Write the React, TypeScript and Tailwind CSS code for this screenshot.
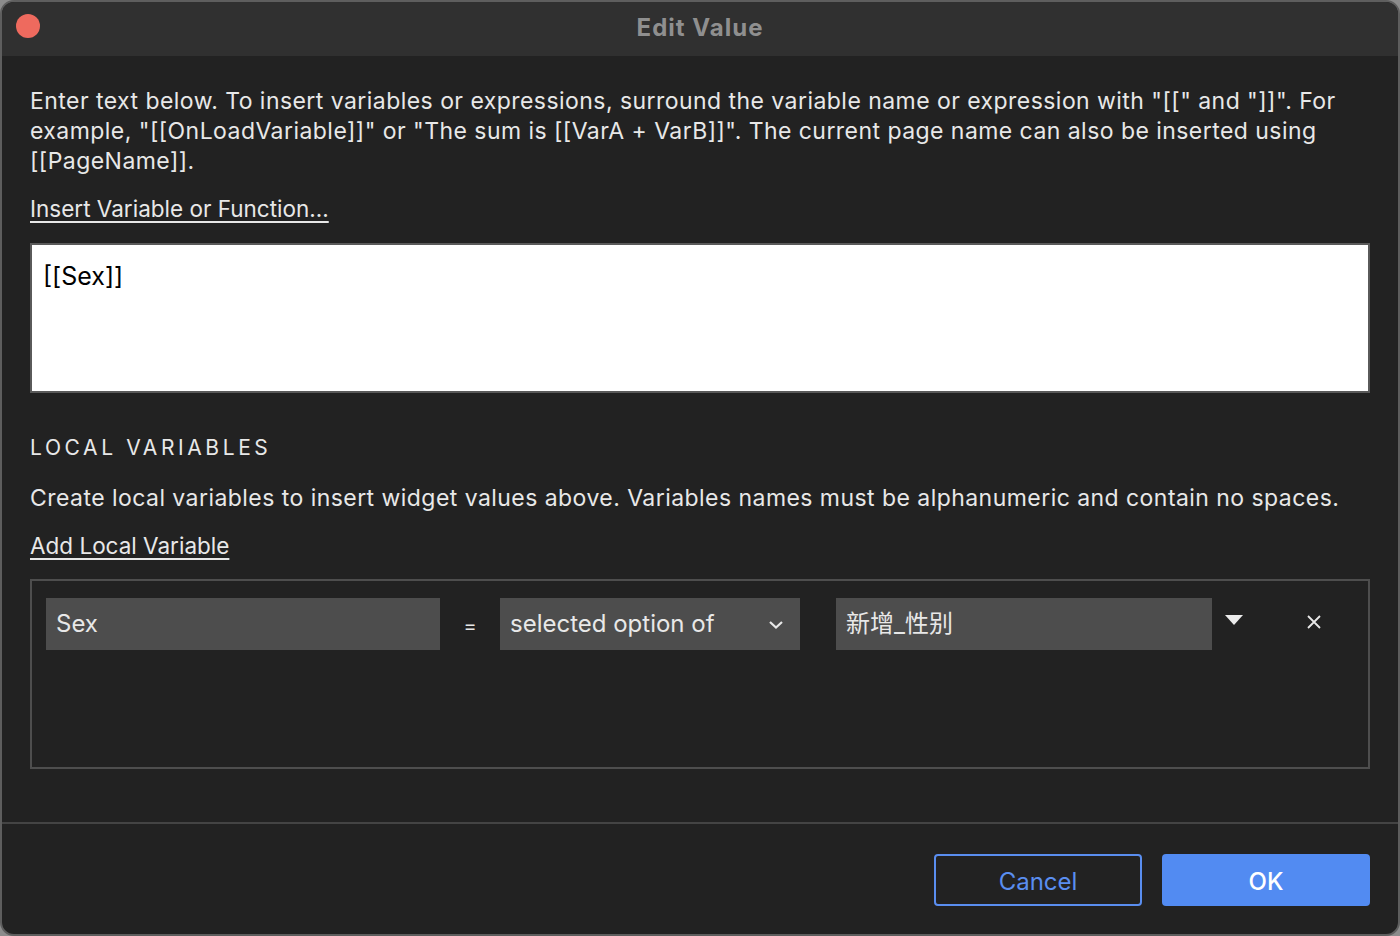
import React from "react";

export default function App() {
  return (
    <div className="w-[1400px] h-[936px] bg-[#8c8c8c] overflow-hidden" style={{ fontFamily: "Inter, 'Noto Sans CJK SC', sans-serif" }}>
      <div className="w-full h-full rounded-[14px] border-2 border-[#5e5e5e] bg-[#222222] overflow-hidden flex flex-col">
        {/* Title bar */}
        <div className="relative h-[54px] bg-[#303030] flex items-center justify-center shrink-0">
          <div className="absolute left-[14px] top-[12px] w-[24px] h-[24px] rounded-full bg-[#ee6a5e]" />
          <div className="text-[24px] font-bold text-[#8f8f8f] tracking-[1px] -mt-[2px]">Edit Value</div>
        </div>
        {/* Body */}
        <div className="flex-1 flex flex-col px-[28px] text-[#e8e8e8] tracking-[0.45px]">
          <p className="mt-[30px] text-[23px] leading-[30px]">
            Enter text below. To insert variables or expressions, surround the variable name or expression with "[[" and "]]". For example, "[[OnLoadVariable]]" or "The sum is [[VarA + VarB]]". The current page name can also be inserted using [[PageName]].
          </p>
          <div className="mt-[18px] text-[22.5px] leading-[30px] tracking-normal underline underline-offset-[4px]">Insert Variable or Function...</div>
          <div className="mt-[19px] h-[150px] bg-white border-2 border-[#5a5a5a] px-[11px] pt-[15px] text-[25px] tracking-normal text-black leading-[32px]">[[Sex]]</div>
          <div className="mt-[40px] text-[21px] leading-[30px] tracking-[3.6px]">LOCAL VARIABLES</div>
          <p className="mt-[20px] text-[23px] leading-[30px]">Create local variables to insert widget values above. Variables names must be alphanumeric and contain no spaces.</p>
          <div className="mt-[18px] text-[22.5px] leading-[30px] tracking-normal underline underline-offset-[4px]">Add Local Variable</div>
          <div className="mt-[18px] h-[190px] border-2 border-[#4e4e4e] px-[14px] pt-[17px] tracking-normal">
            <div className="flex items-center h-[52px]">
              <div className="w-[394px] h-[52px] bg-[#4d4d4d] flex items-center px-[10px] text-[24px] text-[#e8e8e8]">Sex</div>
              <div className="w-[60px] text-center text-[20px] text-[#e8e8e8] mt-[3px]">=</div>
              <div className="w-[300px] h-[52px] bg-[#4d4d4d] flex items-center justify-between px-[10px] text-[24px] text-[#e8e8e8]">
                <span>selected option of</span>
                <svg width="16" height="10" viewBox="0 0 16 10" className="mr-[6px] mt-[2px]">
                  <path d="M2 2 L8 7.5 L14 2" fill="none" stroke="#e8e8e8" strokeWidth="2.2" />
                </svg>
              </div>
              <div className="w-[36px]" />
              <div className="w-[376px] h-[52px] bg-[#4d4d4d] flex items-center px-[10px] text-[24px] text-[#e8e8e8]">新增_性别</div>
              <div className="w-[44px] flex justify-center -mt-[8px]">
                <svg width="18" height="10" viewBox="0 0 18 10"><path d="M0 0 L18 0 L9 10 Z" fill="#ececec" /></svg>
              </div>
              <div className="w-[46px]" />
              <div className="w-[24px] flex justify-center -mt-[4px]">
                <svg width="16" height="16" viewBox="0 0 16 16"><path d="M2 2 L14 14 M14 2 L2 14" stroke="#e8e8e8" strokeWidth="1.8" /></svg>
              </div>
            </div>
          </div>
        </div>
        {/* Footer */}
        <div className="shrink-0 h-[112px] border-t-2 border-[#444444] flex items-start justify-end gap-[20px] pr-[28px] pt-[30px]">
          <button className="w-[208px] h-[52px] rounded-[4px] border-2 border-[#5a8ef0] text-[#5a8ef0] text-[24px] pt-[3px]">Cancel</button>
          <button className="w-[208px] h-[52px] rounded-[4px] bg-[#528bf2] text-white text-[24px] font-medium pt-[3px]">OK</button>
        </div>
      </div>
    </div>
  );
}
